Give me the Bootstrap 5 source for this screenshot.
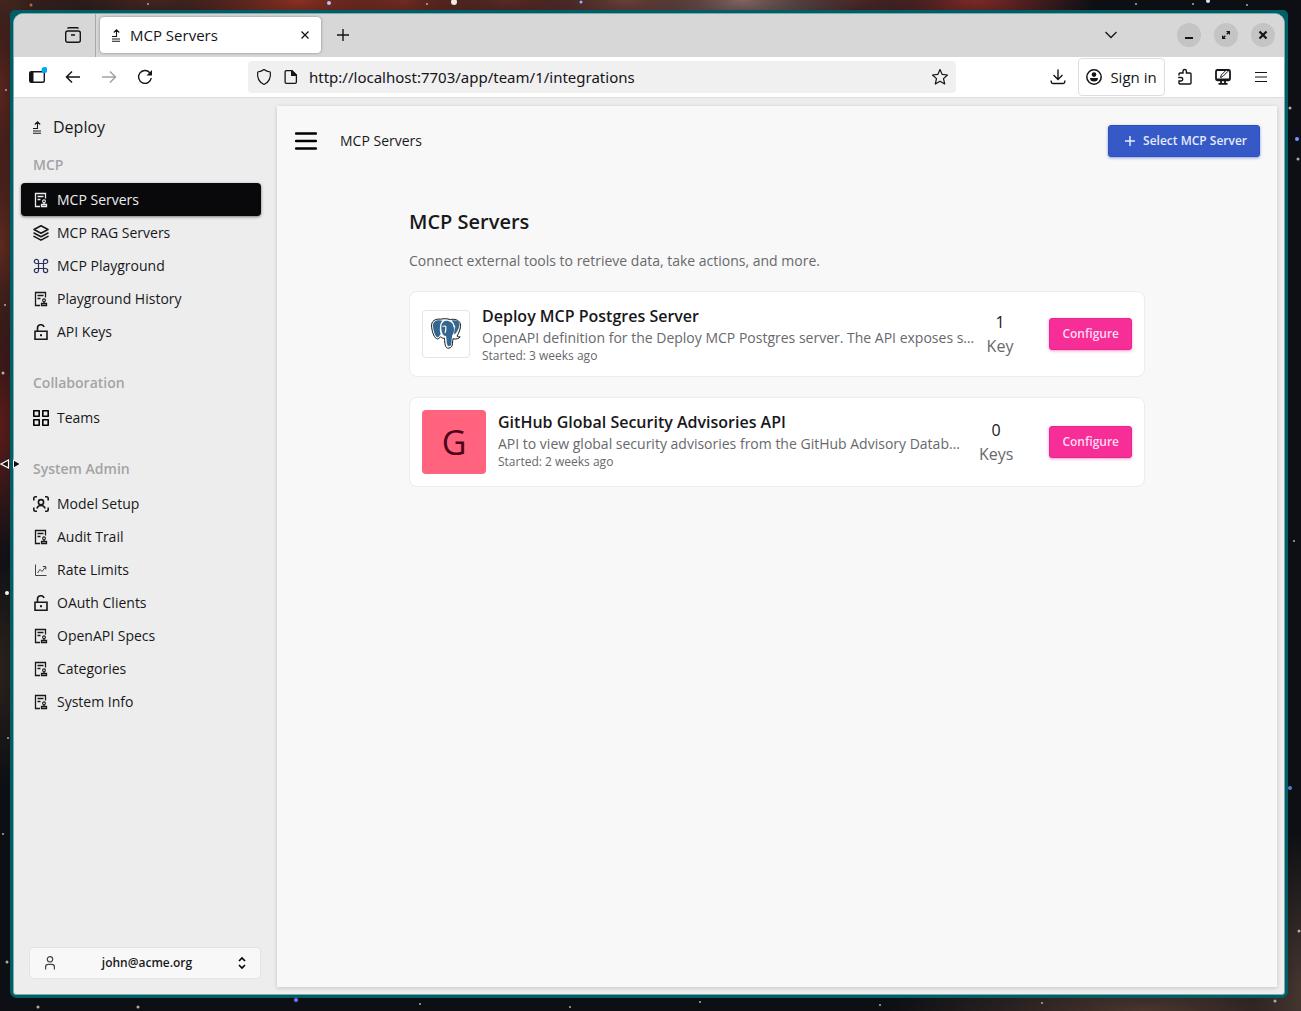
<!DOCTYPE html>
<html lang="en">
<head>
<meta charset="utf-8">
<meta name="viewport" content="width=device-width, initial-scale=1">
<title>MCP Servers</title>
<link href="https://cdn.jsdelivr.net/npm/bootstrap@5.3.0/dist/css/bootstrap.min.css" rel="stylesheet">
<style>
  body {
    font-family: "Open Sans", sans-serif; font-size: 14px; line-height: 20px; color: #18181b;
    padding: 10px 13px 13px 10px;
    background-color: #0d0f14;
    background-image:
      radial-gradient(ellipse 120px 40px at 23% 0, #8a3022 0, transparent 100%),
      radial-gradient(ellipse 90px 40px at 31% 0, #6d2a20 0, transparent 100%),
      radial-gradient(ellipse 120px 40px at 39% 0, #5a2a24 0, transparent 100%),
      radial-gradient(ellipse 110px 40px at 48% 0, #6a4038 0, transparent 100%),
      radial-gradient(ellipse 120px 40px at 57% 0, #80645f 0, transparent 100%),
      radial-gradient(ellipse 90px 40px at 66% 0, #4a2626 0, transparent 100%),
      radial-gradient(ellipse 120px 40px at 75% 0, #7c2a26 0, transparent 100%),
      radial-gradient(ellipse 160px 40px at 12% 0, #43251f 0, transparent 100%),
      radial-gradient(ellipse 90px 50px at 0 0, #43251f 0, transparent 100%),
      radial-gradient(ellipse 40px 150px at 0 9%, #5a261d 0, transparent 100%),
      radial-gradient(ellipse 40px 130px at 0 24%, #5e2a1e 0, transparent 100%),
      radial-gradient(ellipse 40px 140px at 0 42%, #5a1d19 0, transparent 100%),
      radial-gradient(ellipse 40px 120px at 0 66%, #2c211b 0, transparent 100%),
      radial-gradient(ellipse 50px 160px at 100% 98%, #463630 0, transparent 100%),
      radial-gradient(ellipse 260px 50px at 88% 100%, #4a352e 0, transparent 100%);
  }
  .sky-stars { position: fixed; inset: 0; width: 100%; height: 100%; z-index: -1; }
  .resize-pointer { position: absolute; left: 0; top: 457px; z-index: 5; }
  .window { border: 3px solid #005f66; border-radius: 5px 5px 7px 7px; background: #005f66; }
  .window-body { border: 1px solid #7fa9ab; border-radius: 10px 10px 3px 3px; overflow: hidden; background: #ededed; }
  svg { display: block; flex: none; }
  .bare { border: 0; background: none; padding: 0; color: inherit; display: flex; align-items: center; justify-content: center; }
  .tab-strip { height: 43px; padding-bottom: 2px; background: #d7d7d7; color: #15141a; }
  .pinned-zone { width: 82px; padding-right: 14px; border-right: 1px solid #a9a9a9; margin-bottom: -2px; padding-bottom: 2px; }
  .browser-tab { width: 221px; height: 36px; margin-left: 4px; padding: 0 8px 0 10px; background: #fff; border-radius: 4px; box-shadow: 0 0 3px rgba(0,0,0,.4); font-size: 15px; }
  .strip-btn { width: 24px; height: 24px; }
  .new-tab { margin-left: 10px; }
  .win-btn { width: 24px; height: 24px; border-radius: 50%; background: #c4c4c4; }
  .window-controls { gap: 13px; padding-right: 9px; margin-left: 6px; }
  .toolbar { height: 41px; padding: 0 5px; background: #fff; border-bottom: 1px solid #dedede; color: #15141a; }
  .tool-btn { width: 36px; height: 36px; }
  .toolbar-end { gap: 2px; }
  .url-box { margin: 0 84px 0 85px; height: 32px; padding: 0 7px; gap: 9px; background: #f0f0f0; border-radius: 4px; }
  .url-box input { border: 0; background: none; outline: 0; font-family: "Noto Sans", sans-serif; font-size: 15px; line-height: 24px; padding: 0; color: #15141a; min-width: 0; }
  .sign-in { height: 38px; width: 87px; gap: 8px; border: 1px solid #dedede; border-radius: 4px; font-size: 15px; background: #fff; }
  .side { width: 263px; padding: 9px 16px 15px 7px; }
  .brand { height: 40px; padding: 0 10px; gap: 10px; font-size: 16px; color: #18181b; text-decoration: none; }
  .group-label { font-size: 14px; line-height: 20px; padding: 8px 12px; margin: 0; font-weight: 600; color: #a3a3a6; }
  .side-group + .side-group { margin-top: 17px; }
  .side-link { height: 33px; padding: 0 12px; gap: 8px; border-radius: 4px; color: #18181b; text-decoration: none; }
  .side-link.active { background: #09090b; color: #ededed; box-shadow: 0 1px 3px rgba(0,0,0,.5); }
  .user-btn { margin-left: 8px; height: 32px; padding: 0 12px; background: #f8f8f8; border: 1px solid #e4e4e4; border-radius: 4px; font-size: 12px; font-weight: 600; color: #18181b; }
  .panel { margin: 8px 7px 7px 0; background: #f8f8f8; box-shadow: 0 1px 4px rgba(0,0,0,.18); }
  .panel-head { padding: 19px 17px 0 18px; }
  .head-title { margin-left: 23px; }
  .act { height: 32px; border-radius: 3px; font-size: 12px; line-height: 18px; font-weight: 600; padding: 0 12px; }
  .act-blue { background: #3559c7; border: 1px solid #2f50b8; color: #e6ebfa; box-shadow: 0 1px 3px rgba(53,89,199,.55); gap: 8px; }
  .act-pink { background: #f72d98; border: 1px solid #e4298c; color: #ffdcef; box-shadow: 0 1px 3px rgba(247,45,152,.5); }
  .act-blue:hover { color: #fff; background: #3559c7; }
  .act-pink:hover { color: #fff; background: #f72d98; }
  .content { max-width: 768px; padding: 51px 16px 0; }
  .content h1 { font-size: 20px; line-height: 28px; font-weight: 600; margin-bottom: 15px; }
  .muted { color: #68686c; }
  .servers { gap: 20px; margin-top: 20px; }
  .server { background: #fff; border: 1px solid #ececec; border-radius: 8px; padding: 12px; gap: 12px; }
  .server h2 { font-size: 16px; line-height: 24px; font-weight: 600; margin: 0; }
  .started { font-size: 12px; line-height: 16px; }
  .key-count { font-size: 16px; line-height: 24px; margin-right: 24px; }
  .logo-box { width: 48px; height: 48px; border: 1px solid #e4e4e7; border-radius: 4px; }
  .letter-box { width: 64px; height: 64px; background: #ff637e; color: #4d0218; border-radius: 4px; font-size: 34px; line-height: 40px; }
</style>
<script src="https://cdn.jsdelivr.net/npm/bootstrap@5.3.0/dist/js/bootstrap.bundle.min.js"></script>
</head>
<body class="min-vh-100 d-flex">

<svg width="0" height="0" class="position-absolute" aria-hidden="true">
  <symbol id="i-deploy" viewBox="0 0 12 14"><path d="M2 8.500h4.500V2M2 11h8M2 13.300h8M3.800 4.500 6.500 1.800 9.200 4.500" fill="none" stroke="currentColor" stroke-width="1.100"/></symbol>
  <symbol id="i-audit" viewBox="0 0 16 16"><path d="M12.500 6.500V1.500H2.500v13h4.500M4.500 4.500h6M4.500 7.500h3" fill="none" stroke="currentColor" stroke-width="1.300"/><circle cx="11" cy="9.300" r="1.400" fill="none" stroke="currentColor" stroke-width="1.100"/><path d="M11 10.500v1.500M8.500 14.500v-2h5v2z" fill="none" stroke="currentColor" stroke-width="1.300"/></symbol>
  <symbol id="i-layers" viewBox="0 0 16 16"><path d="M8 .8 15 4.500 8 8.200 1 4.500zM1 8l7 3.700L15 8M1 11.400l7 3.700 7-3.700" fill="none" stroke="currentColor" stroke-width="1.600" stroke-linejoin="round" stroke-linecap="round"/></symbol>
  <symbol id="i-command" viewBox="0 0 16 16"><path d="M5.500 5.500h5v5h-5zM5.500 5.500H3.400a2.100 2.100 0 1 1 2.100-2.100zM10.500 5.500V3.400a2.100 2.100 0 1 1 2.100 2.100zM10.500 10.500h2.100a2.100 2.100 0 1 1-2.100 2.100zM5.500 10.500v2.100a2.100 2.100 0 1 1-2.100-2.100z" fill="none" stroke="#27315a" stroke-width="1.200"/></symbol>
  <symbol id="i-lock" viewBox="0 0 16 16"><path d="M2 7.200h12v8H2zM4.500 7V4.200a3.400 3.400 0 0 1 6.600-1.200" fill="none" stroke="currentColor" stroke-width="1.600"/><rect x="7" y="10.200" width="2" height="2" fill="currentColor"/></symbol>
  <symbol id="i-grid" viewBox="0 0 16 16"><path d="M.8.800h5.400v5.400H.8zM9.800.800h5.400v5.400H9.800zM.8 9.800h5.400v5.400H.8zM9.800 9.800h5.400v5.400H9.800z" fill="none" stroke="#000" stroke-width="1.600" stroke-linejoin="round"/></symbol>
  <symbol id="i-scan" viewBox="0 0 16 16"><path d="M.8 4.500V2.500Q.8.800 2.500.8H4M12 .8h1.500q1.700 0 1.700 1.700v2M15.200 11.500v2q0 1.700-1.700 1.700H12M4 15.200H2.500q-1.700 0-1.700-1.700v-2M4 12.500q.5-3 4-3t4 3" fill="none" stroke="currentColor" stroke-width="1.600"/><circle cx="8" cy="6.200" r="2.600" fill="none" stroke="currentColor" stroke-width="1.600"/></symbol>
  <symbol id="i-chart" viewBox="0 0 16 16"><path d="M2.500 2.500v11h11M4.500 11l2.500-3.500 2 2L12.500 5M9.800 4.500h3v3" fill="none" stroke="#444" stroke-width="1"/></symbol>
</svg>

<svg class="sky-stars" aria-hidden="true">
  <g fill="#b9a9a4"><circle cx="6" cy="90" r="1"/><circle cx="5" cy="305" r="1"/><circle cx="3" cy="373" r="1.500"/><circle cx="7" cy="593" r="2" fill="#f3f6e0"/><circle cx="3" cy="834" r="1"/><circle cx="8" cy="738" r="1"/><circle cx="7" cy="962" r="1.500"/><circle cx="31" cy="5" r="1.500" fill="#b36a3c"/><circle cx="148" cy="4" r="1"/><circle cx="329" cy="3" r="2" fill="#b7c5ff"/><circle cx="454" cy="2" r="3" fill="#f3e9dc"/><circle cx="427" cy="4" r="1"/><circle cx="581" cy="2" r="1.500" fill="#9fb0ff"/><circle cx="1136" cy="4" r="1"/><circle cx="1193" cy="4" r="1"/><circle cx="1208" cy="1" r="2" fill="#cfe5f2"/><circle cx="1247" cy="5" r="1"/><circle cx="1290" cy="108" r="1.500"/><circle cx="1297" cy="139" r="2" fill="#6e9aff"/><circle cx="1298" cy="159" r="1.500"/><circle cx="1294" cy="541" r="1"/><circle cx="1290" cy="788" r="2" fill="#4e7ed0"/><circle cx="1299" cy="931" r="1.500"/><circle cx="38" cy="1007" r="1.500"/><circle cx="138" cy="1007" r="1.500"/><circle cx="296" cy="1000" r="2" fill="#6b79ff"/><circle cx="420" cy="1004" r="1"/><circle cx="570" cy="1007" r="1"/><circle cx="700" cy="1002" r="1"/><circle cx="880" cy="1005" r="1"/><circle cx="1042" cy="1003" r="1"/><circle cx="1275" cy="1001" r="1.500"/></g>
</svg>
<svg class="resize-pointer" width="22" height="14" viewBox="0 0 22 14" aria-hidden="true"><path d="M1 7 8.500 3v8z" fill="#111" stroke="#fff" stroke-width="1.200"/><path d="M20.500 7 13.500 3v8z" fill="#111" stroke="#fff" stroke-width="1"/></svg>

<div class="window flex-grow-1 d-flex">
<div class="window-body flex-grow-1 d-flex flex-column">

  <div class="tab-strip d-flex align-items-center">
    <div class="pinned-zone align-self-stretch d-flex align-items-center justify-content-end">
      <button class="bare" aria-label="Recent browsing"><svg width="16" height="16" viewBox="0 0 16 16" fill="none" stroke="currentColor" stroke-width="1.400"><rect x=".7" y="4" width="14.600" height="11.300" rx="2"/><path d="M2.500 1.500Q3 .7 4 .7h8q1 0 1.500.8M6 8h4"/></svg></button>
    </div>
    <div class="browser-tab d-flex align-items-center">
      <svg width="12" height="14"><use href="#i-deploy"/></svg>
      <span class="ms-2 me-auto">MCP Servers</span>
      <button class="bare" aria-label="Close tab"><svg class="me-1" width="8" height="8" viewBox="0 0 8 8" stroke="currentColor" stroke-width="1.300"><path d="M.5.500l7 7M7.500.500l-7 7"/></svg></button>
    </div>
    <button class="bare strip-btn new-tab" aria-label="New tab"><svg width="12" height="12" viewBox="0 0 12 12" stroke="currentColor" stroke-width="1.400"><path d="M6 0v12M0 6h12"/></svg></button>
    <button class="bare strip-btn ms-auto me-5" aria-label="List tabs"><svg width="12" height="8" viewBox="0 0 12 8" fill="none" stroke="currentColor" stroke-width="1.300"><path d="M.5 1 6 6.500 11.500 1"/></svg></button>
    <div class="window-controls d-flex">
      <button class="bare win-btn" aria-label="Minimize"><svg width="12" height="12" viewBox="0 0 12 12"><path d="M2 8h8v2H2z" fill="currentColor"/></svg></button>
      <button class="bare win-btn" aria-label="Maximize"><svg width="12" height="12" viewBox="0 0 12 12"><path d="M2.500 9.500l7-7" stroke="currentColor" stroke-width="1.300" stroke-dasharray="4 2"/><path d="M6 2h4v4zM2 6v4h4z" fill="currentColor"/></svg></button>
      <button class="bare win-btn" aria-label="Close"><svg width="12" height="12" viewBox="0 0 12 12" stroke="currentColor" stroke-width="2.200"><path d="M2.500 2.500l7 7M9.500 2.500l-7 7"/></svg></button>
    </div>
  </div>

  <div class="toolbar d-flex align-items-center">
    <button class="bare tool-btn" aria-label="Sidebar"><svg width="20" height="20" viewBox="0 0 20 20"><rect x="2.700" y="4.700" width="14.600" height="10.600" rx="1.500" fill="none" stroke="currentColor" stroke-width="1.400"/><path d="M3 5h3.500v10H3z" fill="currentColor"/><circle cx="17.500" cy="3" r="3" fill="#00a8f5"/></svg></button>
    <button class="bare tool-btn" aria-label="Back"><svg width="16" height="16" viewBox="0 0 16 16" fill="none" stroke="currentColor" stroke-width="1.500"><path d="M15 8H1.500M7 2.500 1.500 8 7 13.500"/></svg></button>
    <button class="bare tool-btn" aria-label="Forward" disabled><svg width="16" height="16" viewBox="0 0 16 16" fill="none" stroke="#a3a3a6" stroke-width="1.500"><path d="M1 8h13.500M9 2.500 14.500 8 9 13.500"/></svg></button>
    <button class="bare tool-btn" aria-label="Reload"><svg width="16" height="16" viewBox="0 0 16 16"><path d="M14.300 9A6.400 6.400 0 1 1 12.800 3.700" fill="none" stroke="currentColor" stroke-width="1.400"/><path d="M15 1v5.500H9.500z" fill="currentColor"/></svg></button>
    <label class="url-box flex-grow-1 d-flex align-items-center">
      <svg width="18" height="18" viewBox="0 0 18 18" fill="none" stroke="currentColor" stroke-width="1.200"><path d="M9 1.500q2.500 2 6.300 2.500Q16.500 13 9 16.500 1.500 13 2.700 4 6.500 3.500 9 1.500z" stroke-linejoin="round"/></svg>
      <svg width="18" height="18" viewBox="0 0 18 18"><path d="M4.500 2.600h5.500l4.400 4.400v7q0 1.400-1.400 1.400H4.500q-1.400 0-1.400-1.400V4q0-1.400 1.400-1.400z" fill="none" stroke="currentColor" stroke-width="1.300"/><path d="M9 2.500h1.500L14.500 6.500V8H9z" fill="currentColor"/></svg>
      <input class="flex-grow-1" type="text" aria-label="Address" value="http://localhost:7703/app/team/1/integrations">
      <svg width="18" height="18" viewBox="0 0 18 18" fill="none" stroke="currentColor" stroke-width="1.200" stroke-linejoin="round"><path d="M9 1.500l2.200 4.900 5.300.6-4 3.600 1.200 5.400L9 13.300 4.300 16l1.200-5.400-4-3.600 5.300-.6z"/></svg>
    </label>
    <div class="toolbar-end d-flex align-items-center">
      <button class="bare tool-btn" aria-label="Downloads"><svg width="16" height="16" viewBox="0 0 16 16" fill="none" stroke="currentColor" stroke-width="1.400"><path d="M8 .500v10M3.500 6 8 10.500 12.500 6M1.200 11.500v1.300q0 1.700 1.700 1.700h10.200q1.700 0 1.700-1.700v-1.300"/></svg></button>
      <button class="bare sign-in text-nowrap"><svg width="16" height="16" viewBox="0 0 16 16"><circle cx="8" cy="8" r="7.200" fill="none" stroke="currentColor" stroke-width="1.500"/><circle cx="8" cy="5.600" r="2.300" fill="currentColor"/><path d="M4 9h8q0 3.500-4 3.500T4 9z" fill="currentColor"/></svg>Sign in</button>
      <button class="bare tool-btn" aria-label="Extensions"><svg width="16" height="18" viewBox="0 0 16 18" fill="none" stroke="currentColor" stroke-width="1.400"><path d="M2 7.500V6q0-1 1-1h3V3.200a1.700 1.700 0 0 1 3.400 0V5H13q1 0 1 1v9q0 1-1 1H3q-1 0-1-1v-2h2a1.700 1.700 0 0 0 0-3.500H1.200"/></svg></button>
      <button class="bare tool-btn" aria-label="Screen capture"><svg width="18" height="18" viewBox="0 0 18 18"><rect x="2" y="2" width="14" height="10.300" rx="1.500" fill="#fff" stroke="currentColor" stroke-width="1.800"/><path d="M2 10.500h14v1.500H2z" fill="currentColor"/><path d="M7 12.500v2.500M11 12.500v2.500M4.500 15.800h9" stroke="currentColor" stroke-width="1.800"/><path d="M6.500 9.500l.8-2.500 5-5 1.500 1.500-5 5z" fill="#fff" stroke="currentColor"/></svg></button>
      <button class="bare tool-btn" aria-label="Menu"><svg width="12" height="12" viewBox="0 0 12 12" stroke="currentColor" stroke-width="1.200"><path d="M0 1.500h12M0 6h12M0 10.500h12"/></svg></button>
    </div>
  </div>

  <div class="flex-grow-1 d-flex">
    <aside class="side flex-shrink-0 d-flex flex-column">
      <a class="brand d-flex align-items-center" href="#"><svg width="12" height="14"><use href="#i-deploy"/></svg>Deploy</a>
      <nav class="d-flex flex-column">
        <div class="side-group">
          <h6 class="group-label">MCP</h6>
          <a class="side-link active d-flex align-items-center" href="#" aria-current="page"><svg width="16" height="16"><use href="#i-audit"/></svg>MCP Servers</a>
          <a class="side-link d-flex align-items-center" href="#"><svg width="16" height="16"><use href="#i-layers"/></svg>MCP RAG Servers</a>
          <a class="side-link d-flex align-items-center" href="#"><svg width="16" height="16"><use href="#i-command"/></svg>MCP Playground</a>
          <a class="side-link d-flex align-items-center" href="#"><svg width="16" height="16"><use href="#i-audit"/></svg>Playground History</a>
          <a class="side-link d-flex align-items-center" href="#"><svg width="16" height="16"><use href="#i-lock"/></svg>API Keys</a>
        </div>
        <div class="side-group">
          <h6 class="group-label">Collaboration</h6>
          <a class="side-link d-flex align-items-center" href="#"><svg width="16" height="16"><use href="#i-grid"/></svg>Teams</a>
        </div>
        <div class="side-group">
          <h6 class="group-label">System Admin</h6>
          <a class="side-link d-flex align-items-center" href="#"><svg width="16" height="16"><use href="#i-scan"/></svg>Model Setup</a>
          <a class="side-link d-flex align-items-center" href="#"><svg width="16" height="16"><use href="#i-audit"/></svg>Audit Trail</a>
          <a class="side-link d-flex align-items-center" href="#"><svg width="16" height="16"><use href="#i-chart"/></svg>Rate Limits</a>
          <a class="side-link d-flex align-items-center" href="#"><svg width="16" height="16"><use href="#i-lock"/></svg>OAuth Clients</a>
          <a class="side-link d-flex align-items-center" href="#"><svg width="16" height="16"><use href="#i-audit"/></svg>OpenAPI Specs</a>
          <a class="side-link d-flex align-items-center" href="#"><svg width="16" height="16"><use href="#i-audit"/></svg>Categories</a>
          <a class="side-link d-flex align-items-center" href="#"><svg width="16" height="16"><use href="#i-audit"/></svg>System Info</a>
        </div>
      </nav>
      <button class="user-btn mt-auto d-flex align-items-center justify-content-between" aria-haspopup="menu">
        <svg width="16" height="16" viewBox="0 0 16 16" fill="none" stroke="#444" stroke-width="1.200"><circle cx="8" cy="4.300" r="2.700"/><path d="M3.600 14.500v-2.500q0-2.600 2.600-2.600h3.600q2.600 0 2.600 2.600v2.500"/></svg>
        john@acme.org
        <svg width="12" height="14" viewBox="0 0 12 14" fill="none" stroke="#000" stroke-width="1.600"><path d="M3 5l3-3 3 3M3 9l3 3 3-3"/></svg>
      </button>
    </aside>

    <main class="panel flex-grow-1">
      <div class="panel-head d-flex align-items-center">
        <button class="bare" aria-label="Toggle sidebar"><svg width="22" height="18" viewBox="0 0 22 18" stroke="#000" stroke-width="2.400" stroke-linecap="round"><path d="M1 1.500h20M1 9h20M1 16.500h20"/></svg></button>
        <span class="head-title">MCP Servers</span>
        <button class="btn act act-blue ms-auto d-flex align-items-center"><svg class="ms-1" width="10" height="10" viewBox="0 0 10 10" stroke="currentColor" stroke-width="1.500"><path d="M5 0v10M0 5h10"/></svg>Select MCP Server</button>
      </div>

      <div class="content mx-auto">
        <h1>MCP Servers</h1>
        <p class="muted mb-0">Connect external tools to retrieve data, take actions, and more.</p>
        <div class="d-flex flex-column servers">
          <article class="server d-flex align-items-center">
            <div class="logo-box flex-shrink-0 d-flex align-items-center justify-content-center">
              <svg width="32" height="32" viewBox="0 0 32 32" role="img" aria-label="PostgreSQL">
                <path d="M10.500 1.200C5 .6 1.400 3 1.600 8c.2 4.500 2 11 4.800 12.600 1.600.9 3-.4 4.200-1.900.8 1.300 2.300 1.700 4 1.500-.3 1.200.1 3.200.4 5.400.5 3.500 1.700 5 4 4.500 2.500-.5 3.300-2 3.500-4.800.2-2 .3-3.500.4-4.500 3.300.7 6.500-.3 7.300-2-1.500.2-2.800 0-3.200-.6 2.200-3.500 4.200-9.200 3.300-12.600C29 1.800 24 .6 20.500 1.600 17 .4 13.500.6 10.500 1.200z" fill="#fff" stroke="#111" stroke-width="1"/>
                <path d="M9.800 2.300C5.800 2 2.800 3.800 3 8c.2 4 2 10 4 11.200 1.600.6 3-2.400 3.800-3.500-1.300-2-1-4.500-.8-7C10.200 6 11 4 12.500 2.700c-1-.2-1.800-.4-2.700-.4zM16 2.700c-3.700.6-4.800 4-4.700 7 .1 3.500 1.200 8.500 4.700 8.300.8 2.500.2 6.500 1.500 9.500.8 1.200 3.500.8 3.800-1.200.5-3.500.3-6 1-9 2-2 2-6 1.200-9.500-.9-3.500-4.700-5.200-7.500-5.100zM21.500 2.600c2.200 2 3.300 4.500 3.200 7.500 0 2.200-.8 3.800-.3 6.400 2.700-1.700 5.700-8.200 4.900-11.600-1.200-2.500-5-3-7.800-2.300z" fill="#336791"/>
                <path d="M12.500 8.500q2-1 3.300 0 .5 3-.8 6.500M23 8q1.800-1 1.800 1.500" fill="none" stroke="#fff" stroke-width="1.100"/>
              </svg>
            </div>
            <div class="flex-grow-1 align-self-start overflow-hidden">
              <h2 class="text-truncate">Deploy MCP Postgres Server</h2>
              <div class="muted text-truncate">OpenAPI definition for the Deploy MCP Postgres server. The API exposes several endpoints for querying data.</div>
              <div class="muted started">Started: 3 weeks ago</div>
            </div>
            <div class="key-count text-center"><div>1</div><div class="muted">Key</div></div>
            <button class="btn act act-pink">Configure</button>
          </article>
          <article class="server d-flex align-items-center">
            <div class="letter-box flex-shrink-0 d-flex align-items-center justify-content-center">G</div>
            <div class="flex-grow-1 align-self-start overflow-hidden">
              <h2 class="text-truncate">GitHub Global Security Advisories API</h2>
              <div class="muted text-truncate">API to view global security advisories from the GitHub Advisory Database, with filters.</div>
              <div class="muted started">Started: 2 weeks ago</div>
            </div>
            <div class="key-count text-center"><div>0</div><div class="muted">Keys</div></div>
            <button class="btn act act-pink">Configure</button>
          </article>
        </div>
      </div>
    </main>
  </div>
</div>
</div>
</body>
</html>
